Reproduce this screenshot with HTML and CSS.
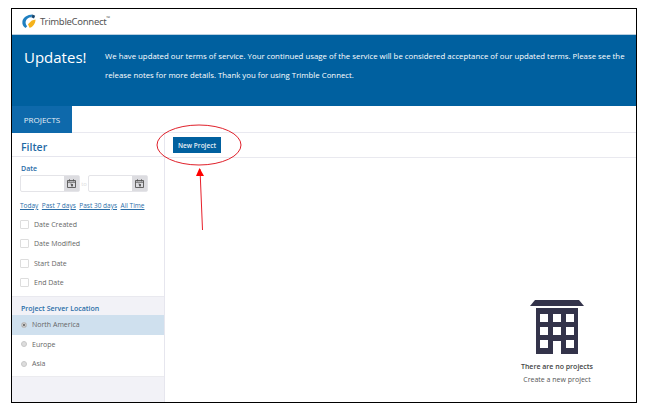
FILE: index.html
```html
<!DOCTYPE html>
<html lang="en">
<head>
<meta charset="utf-8">
<title>Trimble Connect</title>
<link rel="stylesheet" href="styles.css">
</head>
<body>
<div class="frame">
  <header class="topbar">
    <svg class="logo" width="14" height="15" viewBox="0 0 14 15">
      <path d="M10.500 .6 L9.300 3.300 C6.500 3.300 4.300 5 3.700 7.400 C3.300 9 4 10.800 5.200 12.200 L3.500 14 C1.200 12.500 0 10.200 .4 7.500 C.9 3.800 5.500 .6 10.500 .6Z" fill="#1f7fc0"/>
      <path d="M6 10.200 L9.800 6.400 L13.600 5.400 C13.400 9 11.200 12.800 7.500 13.800Z" fill="#f5b21a"/>
      <path d="M10.500 .6 L13.200 1.800 L12 4.400 L9.300 3.300Z" fill="#16456e"/>
    </svg>
    <span class="brand">TrimbleConnect</span><sup class="tm">™</sup>
  </header>
  <section class="banner">
    <h1 class="banner-title">Updates!</h1>
    <p class="banner-text">We have updated our terms of service. Your continued usage of the service will be considered acceptance of our updated terms. Please see the release notes for more details. Thank you for using Trimble Connect.</p>
  </section>
  <nav class="tabs"><span class="tab">PROJECTS</span></nav>
  <div class="main">
    <aside class="sidebar">
      <div class="filter-head">Filter</div>
      <div class="filter-body">
        <div class="label">Date</div>
        <div class="date-row">
          <div class="date-input"><span class="date-btn"><svg width="9" height="9" viewBox="0 0 9 9"><path d="M.5 1.500h8v7h-8zM.5 3.200h8M2.500 .3v2M6.500 .3v2M3.500 5h1v2.400M5.500 5v2.400" fill="none" stroke="#555" stroke-width=".9"/></svg></span></div>
          <span class="to">to</span>
          <div class="date-input"><span class="date-btn"><svg width="9" height="9" viewBox="0 0 9 9"><path d="M.5 1.500h8v7h-8zM.5 3.200h8M2.500 .3v2M6.500 .3v2M3.500 5h1v2.400M5.500 5v2.400" fill="none" stroke="#555" stroke-width=".9"/></svg></span></div>
        </div>
        <div class="quick-links"><a>Today</a><a>Past 7 days</a><a>Past 30 days</a><a>All Time</a></div>
        <div class="check-row"><span class="check"></span>Date Created</div>
        <div class="check-row"><span class="check"></span>Date Modified</div>
        <div class="check-row"><span class="check"></span>Start Date</div>
        <div class="check-row"><span class="check"></span>End Date</div>
      </div>
      <div class="location">
        <div class="label loc-label">Project Server Location</div>
        <div class="radio-row selected"><span class="radio on"></span>North America</div>
        <div class="radio-row"><span class="radio"></span>Europe</div>
        <div class="radio-row"><span class="radio"></span>Asia</div>
      </div>
    </aside>
    <div class="content">
      <div class="toolbar"><button class="new-btn">New Project</button></div>
      <div class="empty">
        <svg class="building" width="54" height="54" viewBox="0 0 54 54">
          <path d="M5 0H49L54 6H0Z" fill="#33334a"/>
          <path fill-rule="evenodd" fill="#33334a" d="M6 8H48V54H31V41H23V54H6ZM10 14V22H18V14ZM23 14V22H31V14ZM36 14V22H44V14ZM10 27V35H18V27ZM23 27V35H31V27ZM36 27V35H44V27ZM10 40V48H18V40ZM36 40V48H44V40Z"/>
        </svg>
        <div class="empty-title">There are no projects</div>
        <div class="empty-sub">Create a new project</div>
      </div>
    </div>
  </div>
  <svg class="annotation" width="626" height="395" viewBox="0 0 626 395">
    <ellipse cx="187" cy="136" rx="42" ry="20" fill="none" stroke="#e0202a" stroke-width="1"/>
    <path d="M188 160 L190.500 221" stroke="#e8202a" stroke-width="1" fill="none"/>
    <path d="M187.500 159 L184 167 H192Z" fill="#f00"/>
  </svg>
</div>
</body>
</html>
```
FILE: styles.css
```css
* { box-sizing: border-box; }
html, body { margin: 0; background: #fff; }
body { font-family: "Open Sans", "Noto Sans", sans-serif; height: 413px; overflow: hidden; padding: 8px 0 0 11px; }
.frame { position: relative; width: 626px; height: 395px; border: 1px solid #000; background: #f2f2f7; display: flex; flex-direction: column; overflow: hidden; }
.topbar { height: 26px; background: #fff; display: flex; align-items: center; padding-left: 10px; flex: none; border-bottom: 1px solid #b9cfe0; }
.logo { margin-right: 4px; }
.brand { font-family: "Noto Sans", sans-serif; font-size: 9.500px; letter-spacing: -.3px; color: #555; }
.tm { font-size: 5px; color: #555; align-self: flex-start; margin-top: 6px; }
.banner { height: 71px; background: #00609f; color: #fff; flex: none; display: flex; }
.banner-title { margin: 10px 0 0 12px; width: 81px; font-size: 15px; font-weight: 400; line-height: 24px; flex: none; }
.banner-text { margin: 12px 0 0; width: 525px; font-size: 7.820px; line-height: 19.400px; }
.tabs { height: 27px; background: #fff; border-bottom: 1px solid #e9e9f0; flex: none; }
.tab { display: inline-flex; width: 60px; height: 27px; align-items: center; justify-content: center; background: #0e69ab; color: #e8f0f6; font-size: 8px; }
.main { flex: 1; display: flex; min-height: 0; }
.sidebar { width: 153px; flex: none; border-right: 1px solid #e6e6ee; }
.filter-head { height: 24px; background: #fff; border-bottom: 1px solid #e6e6ee; color: #1f6aa5; font-size: 10.500px; font-weight: 600; padding: 7px 0 0 9px; line-height: 14px; }
.filter-body { background: #fff; height: 140px; padding: 7px 0 0 8px; border-bottom: 1px solid #e9e9ef; }
.label { color: #2b6ea8; font-size: 7px; font-weight: 600; line-height: 10px; padding-left: 1px; }
.date-row { display: flex; align-items: center; margin-top: 1px; }
.date-input { width: 60px; height: 17px; background: #fff; border: 1px solid #e4e4e8; border-radius: 2px; display: flex; justify-content: flex-end; }
.date-btn { width: 15px; background: #dcdce0; display: flex; align-items: center; justify-content: center; }
.to { width: 8px; font-size: 6px; color: #ddd; text-align: center; }
.quick-links { display: flex; gap: 3.500px; margin-top: 9px; font-size: 6.500px; line-height: 10px; color: #2b6ea8; }
.quick-links a { text-decoration: underline; }
.check-row { display: flex; align-items: center; height: 19.500px; font-size: 7px; color: #666; margin-top: 0; }
.quick-links + .check-row { margin-top: 3.500px; }
.check { width: 9px; height: 9px; border: 1px solid #ddd; border-radius: 1px; margin-right: 5px; background: #fff; }
.location { background: #fff; height: 80px; border-bottom: 1px solid #ebebef; }
.loc-label { background: #f2f2f7; height: 18px; padding: 7px 0 0 9px; line-height: 9px; }
.radio-row { display: flex; align-items: center; height: 19.500px; padding-left: 9px; font-size: 7px; color: #666; }
.radio-row.selected { background: #cfe0ee; }
.radio { width: 6px; height: 6px; border-radius: 50%; background: #ddd; border: 1px solid #c8c8c8; margin-right: 5px; }
.radio.on { background: #555; box-shadow: inset 0 0 0 1px #ddd; }
.content { flex: 1; background: #fff; display: flex; flex-direction: column; min-width: 0; }
.toolbar { height: 25px; border-bottom: 1px solid #e9e9ef; padding: 4px 0 0 8px; flex: none; }
.new-btn { display: block; width: 48px; height: 16px; padding: 0; border: 0; background: #00609f; color: #e8f0f6; font: 600 6.500px "Open Sans", sans-serif; }
.empty { flex: 1; display: flex; flex-direction: column; align-items: center; padding: 142px 0 0 313px; }
.building { display: block; }
.empty-title { margin-top: 7px; font-size: 7px; font-weight: 600; color: #444; line-height: 12px; }
.empty-sub { margin-top: 1px; font-size: 7px; color: #555; line-height: 12px; }
.annotation { position: absolute; left: 0; top: 0; pointer-events: none; }
```
